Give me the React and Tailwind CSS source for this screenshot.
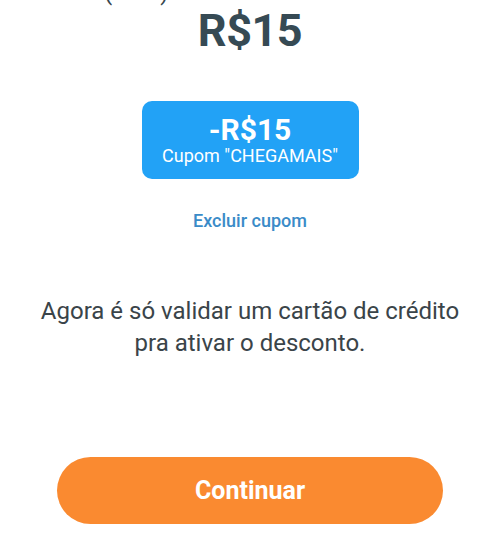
export default function App() {
  return (
    <div className="min-h-[553px] w-full bg-white flex flex-col items-center font-['Roboto',sans-serif]">
      <p className="w-full -mt-[22px] pl-[104px] text-left text-[24px] leading-[28px] text-[#37474f]">
        (total)
      </p>

      <h1 className="mt-[2px] text-[45px] leading-[45px] font-bold text-[#364a54] tracking-[-0.5px]">
        R$15
      </h1>

      <div className="mt-[48px] w-[217px] h-[78px] rounded-[10px] bg-[#22a2f6] flex flex-col items-center justify-center text-white">
        <span className="text-[30px] leading-[31px] font-bold">-R$15</span>
        <span className="text-[18px] leading-[22px]">Cupom "CHEGAMAIS"</span>
      </div>

      <button className="mt-[31px] text-[18px] leading-[22px] font-medium text-[#3a8bc8]">
        Excluir cupom
      </button>

      <p className="mt-[63px] text-center text-[24px] leading-[32px] text-[#3a4449]">
        Agora é só validar um cartão de crédito
        <br />
        pra ativar o desconto.
      </p>

      <button className="mt-[98px] w-[386px] h-[67px] rounded-full bg-[#fa8a30] text-white text-[25px] font-bold">
        Continuar
      </button>
    </div>
  );
}
